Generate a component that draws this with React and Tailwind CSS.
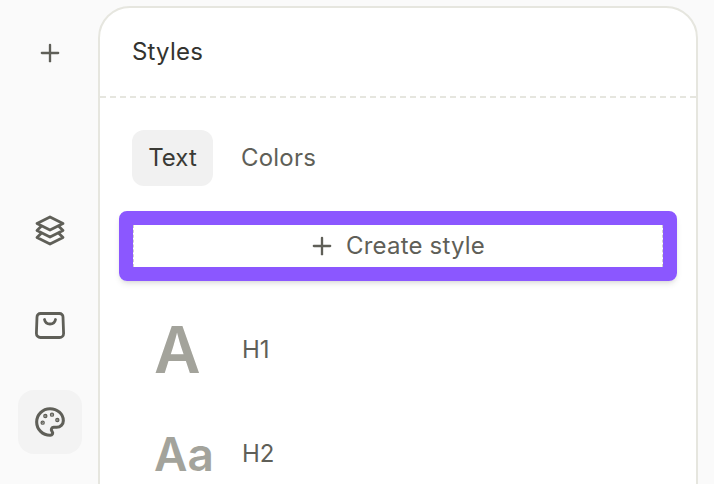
import { Palette, Plus } from "lucide-react";

const SideButton = ({ active, children, className = "" }) => (
  <div className={`flex h-16 w-16 items-center justify-center rounded-2xl ${active ? "bg-[#f3f3f3]" : ""} ${className}`}>
    {children}
  </div>
);

const StyleRow = ({ glyph, glyphClass, label }) => (
  <div className="flex h-[104px] shrink-0 items-center">
    <div className={`flex w-[110px] justify-start pl-[22px] font-semibold text-[#a3a39b] ${glyphClass}`}>{glyph}</div>
    <span className="text-[24px] text-[#5f5f58]">{label}</span>
  </div>
);

export default function App() {
  return (
    <div className="flex h-[484px] w-[714px] overflow-hidden bg-[#fafafa] font-['Inter',sans-serif]">
      <aside className="flex w-[98px] shrink-0 flex-col items-center pt-[21px] pl-[2px] text-[#5f5f58]">
        <SideButton><Plus size={28} strokeWidth={2} /></SideButton>
        <SideButton className="mt-[113px]">
          <svg width="32" height="32" viewBox="0 0 32 32" fill="none" stroke="currentColor" strokeWidth="2.8" strokeLinecap="round" strokeLinejoin="round">
            <path d="M16 3 29 9.500 16 16 3 9.500Z" />
            <path d="M7 12.500 3 16.500 16 23 29 16.500 25 12.500" />
            <path d="M7 19.500 3 23.500 16 30 29 23.500 25 19.500" />
          </svg>
        </SideButton>
        <SideButton className="mt-[31px]">
          <svg width="32" height="32" viewBox="0 0 32 32" fill="none" stroke="currentColor" strokeWidth="2.8" strokeLinecap="round" strokeLinejoin="round">
            <path d="M6.500 4.500h19A3.500 3.500 0 0 1 29 8l.6 16.500a4 4 0 0 1-4 4H6.400a4 4 0 0 1-4-4L3 8a3.500 3.500 0 0 1 3.500-3.500Z" />
            <path d="M10.500 10.500c.6 3 2.700 4.500 5.500 4.500s4.900-1.500 5.500-4.500" />
          </svg>
        </SideButton>
        <SideButton active className="mt-[33px]"><Palette size={32} strokeWidth={2.3} /></SideButton>
      </aside>

      <main className="mt-[6px] flex h-[520px] w-[600px] shrink-0 flex-col rounded-t-[32px] border-2 border-[#e6e6df] bg-white">
        <header className="flex h-[90px] shrink-0 items-center border-b-2 border-dashed border-[#e6e6df] pl-[32px]">
          <h1 className="text-[24px] font-normal tracking-[0.2px] text-[#33332f]">Styles</h1>
        </header>

        <div className="flex items-center gap-[12px] pt-[32px] pl-[32px]">
          <button className="h-[56px] w-[81px] rounded-xl bg-[#f1f1f1] text-[24px] font-normal text-[#3a3a35]">Text</button>
          <button className="h-[56px] px-[16px] text-[24px] font-normal tracking-[0.2px] text-[#5f5f58]">Colors</button>
        </div>

        <div className="mt-[25px] ml-[19px] w-[558px] rounded-lg border-[14px] border-[#8b57ff] shadow-md">
          <button className="flex h-[42px] w-full items-center justify-center gap-[10px] border-x border-dashed border-[#cfcfcf] bg-white pr-[3px] text-[24px] font-normal tracking-[0.2px] text-[#5f5f58]">
            <Plus size={28} strokeWidth={2} />
            Create style
          </button>
        </div>

        <div className="mt-[17px] flex flex-col pl-[32px]">
          <StyleRow glyph="A" glyphClass="text-[64px] leading-none" label="H1" />
          <StyleRow glyph="Aa" glyphClass="text-[46px] leading-none" label="H2" />
        </div>
      </main>
    </div>
  );
}
